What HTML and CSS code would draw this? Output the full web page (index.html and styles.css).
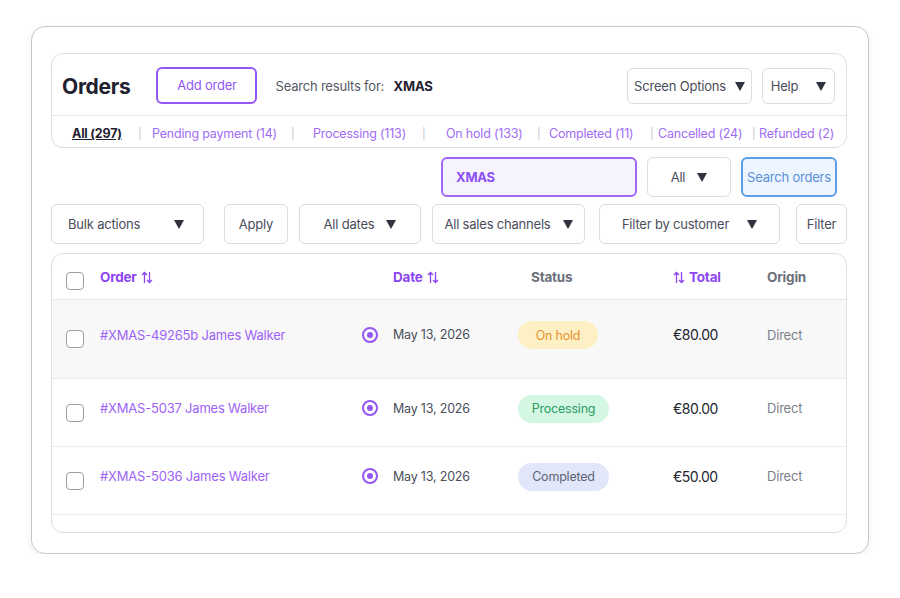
FILE: index.html
```html
<!DOCTYPE html>
<html lang="en">

<head>
  <title>Orders</title>
  <meta charset="utf-8">
  <meta name="viewport" content="width=device-width, initial-scale=1">
  <link rel="stylesheet" href="styles.css">
</head>

<body>
  <div class="frame">
    <!-- page header -->
    <div class="head">
      <div class="head-top">
        <h1 class="title">Orders</h1>
        <button class="btn-add">Add order</button>
        <span class="results">Search results for: <b>XMAS</b></span>
        <span class="spacer"></span>
        <button class="btn btn-screen">Screen Options <i class="caret"></i></button>
        <button class="btn btn-help">Help <i class="caret"></i></button>
      </div>
      <div class="tabs">
        <a class="tab tab-active">All (297)</a>
        <span class="sep">|</span>
        <a class="tab">Pending payment (14)</a>
        <span class="sep">|</span>
        <a class="tab">Processing (113)</a>
        <span class="sep">|</span>
        <a class="tab">On hold (133)</a>
        <span class="sep">|</span>
        <a class="tab">Completed (11)</a>
        <span class="sep">|</span>
        <a class="tab">Cancelled (24)</a>
        <span class="sep">|</span>
        <a class="tab">Refunded (2)</a>
      </div>
    </div>

    <!-- search -->
    <div class="search-row">
      <div class="search-input">XMAS</div>
      <button class="btn btn-all">All <i class="caret"></i></button>
      <button class="btn-search">Search orders</button>
    </div>

    <!-- filters -->
    <div class="filter-row">
      <button class="btn btn-bulk">Bulk actions <i class="caret"></i></button>
      <button class="btn btn-apply">Apply</button>
      <button class="btn btn-dates">All dates <i class="caret"></i></button>
      <button class="btn btn-channels">All sales channels <i class="caret"></i></button>
      <button class="btn btn-customer">Filter by customer <i class="caret"></i></button>
      <button class="btn btn-filter">Filter</button>
    </div>

    <!-- orders table -->
    <div class="table">
      <div class="row row-head">
        <div class="cell cell-check"><span class="check"></span></div>
        <div class="cell th th-sort">Order
          <svg class="sort" width="12" height="13" viewBox="0 0 12 13"><path d="M3.5 12V1.5M1 4l2.5-2.5L6 4M8.5 1v10.5M6 9l2.5 2.5L11 9" fill="none" stroke="currentColor" stroke-width="1.3"/></svg>
        </div>
        <div class="cell"></div>
        <div class="cell th th-sort">Date
          <svg class="sort" width="12" height="13" viewBox="0 0 12 13"><path d="M3.5 12V1.5M1 4l2.5-2.5L6 4M8.5 1v10.5M6 9l2.5 2.5L11 9" fill="none" stroke="currentColor" stroke-width="1.3"/></svg>
        </div>
        <div class="cell th th-status">Status</div>
        <div class="cell th th-sort">
          <svg class="sort" width="12" height="13" viewBox="0 0 12 13"><path d="M3.5 12V1.5M1 4l2.5-2.5L6 4M8.5 1v10.5M6 9l2.5 2.5L11 9" fill="none" stroke="currentColor" stroke-width="1.3"/></svg>
          Total
        </div>
        <div class="cell th">Origin</div>
      </div>

      <div class="row row-first">
        <div class="cell cell-check"><span class="check"></span></div>
        <div class="cell order">#XMAS-49265b James Walker</div>
        <div class="cell"><span class="radio"></span></div>
        <div class="cell date">May 13, 2026</div>
        <div class="cell"><span class="badge badge-hold">On hold</span></div>
        <div class="cell total">€80.00</div>
        <div class="cell origin">Direct</div>
      </div>

      <div class="row">
        <div class="cell cell-check"><span class="check"></span></div>
        <div class="cell order">#XMAS-5037 James Walker</div>
        <div class="cell"><span class="radio"></span></div>
        <div class="cell date">May 13, 2026</div>
        <div class="cell"><span class="badge badge-processing">Processing</span></div>
        <div class="cell total">€80.00</div>
        <div class="cell origin">Direct</div>
      </div>

      <div class="row">
        <div class="cell cell-check"><span class="check"></span></div>
        <div class="cell order">#XMAS-5036 James Walker</div>
        <div class="cell"><span class="radio"></span></div>
        <div class="cell date">May 13, 2026</div>
        <div class="cell"><span class="badge badge-completed">Completed</span></div>
        <div class="cell total">€50.00</div>
        <div class="cell origin">Direct</div>
      </div>

      <div class="table-foot"></div>
    </div>
  </div>
</body>

</html>
```

FILE: styles.css
```css
* {
  box-sizing: border-box;
}

body {
  margin: 0;
  padding: 26px 31px 0;
  background: #fff;
  font-family: Inter, "Noto Sans", sans-serif;
  font-size: 13px;
  color: #3f4350;
  letter-spacing: -0.2px;
}

button {
  font-family: inherit;
  letter-spacing: inherit;
  cursor: pointer;
}

.frame {
  width: 838px;
  height: 528px;
  border: 1.5px solid #c6c6ca;
  border-radius: 14px;
  box-shadow: 0 2px 6px rgba(0, 0, 0, 0.08);
  padding: 26px 21px 0 19px;
}

/* header panel */
.head {
  border: 1px solid #dedee3;
  border-radius: 12px;
  height: 95px;
}

.head-top {
  display: flex;
  align-items: center;
  height: 62px;
  padding: 0 11px 0 10px;
  border-bottom: 1px solid #e4e4ea;
}

.title {
  margin: 4px 26px 0 0;
  font-size: 21px;
  font-weight: 700;
  color: #1f2130;
  letter-spacing: -0.3px;
}

.btn-add {
  width: 101px;
  height: 37px;
  margin: 1px 18px 0 0;
  border: 2px solid #9457f4;
  border-radius: 6px;
  background: #fff;
  color: #9457f4;
  font-size: 13px;
}

.results {
  margin-top: 2px;
  color: #555a66;
}

.results b {
  margin-left: 6px;
  color: #1f2130;
}

.spacer {
  flex: 1;
}

.btn {
  display: inline-flex;
  align-items: center;
  justify-content: center;
  gap: 12px;
  height: 40px;
  border: 1.5px solid #dcdce2;
  border-radius: 6px;
  background: #fff;
  color: #4a4e5a;
  font-size: 13px;
  padding: 0;
}

.caret {
  width: 0;
  height: 0;
  border-left: 5.5px solid transparent;
  border-right: 5.5px solid transparent;
  border-top: 9px solid #30333d;
}

.btn-screen {
  width: 125px;
  height: 36px;
  margin-top: 3px;
  gap: 9px;
}

.btn-help {
  width: 73px;
  height: 36px;
  margin: 3px 0 0 10px;
  gap: 18px;
}

/* status tabs */
.tabs {
  display: grid;
  grid-template-columns: 66px 14px 139px 22px 109px 24px 91px 12px 101px 8px 94px 7px auto;
  align-items: center;
  height: 32px;
  padding: 3px 0 0 20px;
}

.tab {
  color: #a06cf6;
  font-size: 12.5px;
  white-space: nowrap;
}

.tab-active {
  color: #1f2130;
  font-weight: 700;
  text-decoration: underline;
}

.sep {
  color: #c2c4ca;
  font-size: 11px;
}

/* search */
.search-row {
  display: flex;
  justify-content: flex-end;
  gap: 10px;
  padding: 9px 10px 0 0;
}

.search-input {
  display: flex;
  align-items: center;
  width: 196px;
  height: 40px;
  padding-left: 13px;
  border: 2px solid #a266f6;
  border-radius: 6px;
  background: #f6f2fe;
  color: #8c4ff2;
  font-weight: 700;
}

.btn-all {
  width: 84px;
}

.btn-search {
  width: 96px;
  height: 40px;
  border: 2px solid #5e9ee9;
  border-radius: 6px;
  background: #edf5ff;
  color: #5b8fd8;
  font-size: 13px;
  padding: 0;
}

/* filters */
.filter-row {
  display: flex;
  padding-top: 7px;
}

.btn-bulk {
  width: 153px;
  justify-content: space-between;
  padding: 0 19px 0 16px;
}

.btn-apply {
  width: 64px;
  margin-left: 20px;
}

.btn-dates {
  width: 122px;
  margin-left: 11px;
}

.btn-channels {
  width: 153px;
  margin-left: 11px;
}

.btn-customer {
  width: 181px;
  margin-left: 14px;
  gap: 18px;
}

.btn-filter {
  width: 51px;
  margin-left: 16px;
}

/* table */
.table {
  margin-top: 9px;
  border: 1px solid #dedee3;
  border-radius: 12px;
  overflow: hidden;
}

.row {
  display: grid;
  grid-template-columns: 48px 262px 31px 125px 155px 94px 1fr;
  height: 68px;
  border-bottom: 1px solid #ececf0;
}

.row-head {
  height: 46px;
  border-bottom: 1.5px solid #e6e6ee;
}

.row-first {
  height: 79px;
  background: #f8f8f9;
}

.cell {
  display: flex;
  align-items: center;
}

.cell-check {
  padding-left: 14px;
}

.row-head .cell-check {
  padding-top: 9px;
}

.check {
  width: 18px;
  height: 18px;
  border: 1.5px solid #9a9ea8;
  border-radius: 4px;
  background: #fff;
}

.th {
  font-size: 13.5px;
  font-weight: 700;
  color: #6b6f7b;
}

.th-sort {
  color: #8c45f2;
  gap: 4px;
}

.th-status {
  padding-left: 13px;
}

.sort {
  margin-top: 1px;
}

.order {
  color: #9d63f6;
  font-size: 13px;
}

.row .order,
.row .date,
.row .total,
.row .origin {
  padding-bottom: 9px;
}

.row .radio {
  margin-bottom: 9px;
}

.radio {
  width: 16px;
  height: 16px;
  border: 2px solid #9457f4;
  border-radius: 50%;
  display: flex;
  align-items: center;
  justify-content: center;
}

.radio::after {
  content: "";
  width: 6px;
  height: 6px;
  border-radius: 50%;
  background: #9457f4;
}

.date {
  color: #4a4e5a;
  font-size: 12.5px;
}

.badge {
  display: inline-flex;
  align-items: center;
  justify-content: center;
  height: 28px;
  border-radius: 14px;
  font-size: 12.5px;
  margin-bottom: 8px;
}

.badge-hold {
  width: 80px;
  background: #fdf0c4;
  color: #e7942d;
}

.badge-processing {
  width: 91px;
  background: #d3f7e3;
  color: #2c9d64;
}

.badge-completed {
  width: 91px;
  background: #e1e6fb;
  color: #5e6474;
}

.total {
  color: #23252f;
  font-size: 14px;
  letter-spacing: -0.5px;
}

.origin {
  color: #7c808b;
}

.table-foot {
  height: 17px;
}
```
